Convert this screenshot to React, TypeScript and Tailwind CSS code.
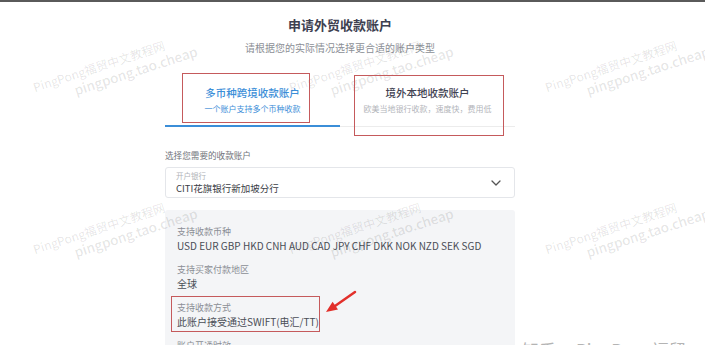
import React from "react";

const currencies = "USD EUR GBP HKD CNH AUD CAD JPY CHF DKK NOK NZD SEK SGD";

const marks = [
  { x: 36, y: 86 },
  { x: 292, y: 86 },
  { x: 548, y: 86 },
  { x: 36, y: 248 },
  { x: 292, y: 248 },
  { x: 548, y: 248 },
];

const Watermark: React.FC<{ x: number; y: number }> = ({ x, y }) => (
  <div
    className="absolute pointer-events-none origin-[0_50%] -rotate-[18deg] text-black/[0.11] whitespace-nowrap"
    style={{ left: x, top: y - 8 }}
  >
    <div className="text-[12px] leading-[14px]">PingPong福贸中文教程网</div>
    <div className="ml-[38px] text-[13.5px] leading-[16px] font-medium">pingpong.tao.cheap</div>
  </div>
);

const InfoItem: React.FC<{ label: string; value: string; first?: boolean }> = ({ label, value, first }) => (
  <div className={first ? "" : "mt-[10px]"}>
    <div className="text-[9px] leading-[13px] text-[#8b8e95]">{label}</div>
    <div className="mt-[1px] text-[10px] leading-[14px] text-[#4a4d56]">{value}</div>
  </div>
);

const App: React.FC = () => {
  return (
    <div className="relative w-[705px] h-[345px] overflow-hidden bg-white border-t-2 border-[#5a5a5a] font-['Noto_Sans_CJK_SC',sans-serif]">
      <div className="ml-[165px] w-[350px]">
        <h1 className="mt-[13px] text-center text-[13px] leading-[20px] font-semibold text-[#3d4050]">
          申请外贸收款账户
        </h1>
        <p className="mt-[6px] text-center text-[10px] leading-[14px] text-[#8c8f96]">
          请根据您的实际情况选择更合适的账户类型
        </p>

        <div className="flex">
          <div className="flex-1 pt-[30px] pb-[10px] text-center border-b-2 border-[#3b8ed8]">
            <div className="text-[10.5px] leading-[16px] font-medium text-[#3b8ed8]">多币种跨境收款账户</div>
            <div className="mt-[2px] text-[8px] leading-[12px] text-[#3b8ed8]">一个账户支持多个币种收款</div>
          </div>
          <div className="flex-1 pt-[30px] pb-[11px] text-center border-b border-[#ececec]">
            <div className="text-[10.5px] leading-[16px] font-medium text-[#3f4252]">境外本地收款账户</div>
            <div className="mt-[2px] text-[8px] leading-[12px] text-[#b3b5ba]">欧美当地银行收款，速度快，费用低</div>
          </div>
        </div>

        <div className="mt-[22px] text-[8.6px] leading-[12px] text-[#70737a]">选择您需要的收款账户</div>

        <div className="mt-[6px] h-[31px] flex items-center justify-between rounded-[3px] border border-[#e4e6ea] pl-[10px] pr-[13px]">
          <div>
            <div className="text-[7.5px] leading-[10px] text-[#b0b3b8]">开户银行</div>
            <div className="mt-[1px] text-[9.5px] leading-[13px] text-[#3a3d46]">CITI花旗银行新加坡分行</div>
          </div>
          <svg width="10" height="6" viewBox="0 0 10 6" fill="none">
            <path d="M1 1l4 4 4-4" stroke="#555" strokeWidth="1.3" strokeLinecap="round" strokeLinejoin="round" />
          </svg>
        </div>

        <div className="mt-[12px] h-[200px] rounded-[3px] bg-[#f4f5f7] pl-[12px] pt-[15px]">
          <InfoItem first label="支持收款币种" value={currencies} />
          <InfoItem label="支持买家付款地区" value="全球" />
          <InfoItem label="支持收款方式" value="此账户接受通过SWIFT(电汇/TT)" />
          <InfoItem label="账户开通时效" value="" />
        </div>
      </div>

      {marks.map((m, i) => (
        <Watermark key={i} x={m.x} y={m.y} />
      ))}

      {/* annotation boxes */}
      <div className="absolute left-[182px] top-[71px] w-[128px] h-[50px] border-[1.5px] border-[#c55a5c]" />
      <div className="absolute left-[354px] top-[73px] w-[150px] h-[61px] border-[1.5px] border-[#c55a5c]" />
      <div className="absolute left-[171px] top-[294px] w-[149px] h-[36px] border-[1.5px] border-[#c55a5c]" />

      <svg className="absolute left-0 top-0 pointer-events-none" width="705" height="345">
        <line x1="355" y1="290" x2="335" y2="304" stroke="#e2302b" strokeWidth="2.5" strokeLinecap="round" />
        <polygon points="326,310 338,307.4 332.6,299.8" fill="#e2302b" />
      </svg>

      <div className="absolute left-[522px] top-[337px] text-[17px] leading-[22px] text-[#b4b4b4] whitespace-nowrap">
        知乎 @PingPong福贸
      </div>
    </div>
  );
};

export default App;
